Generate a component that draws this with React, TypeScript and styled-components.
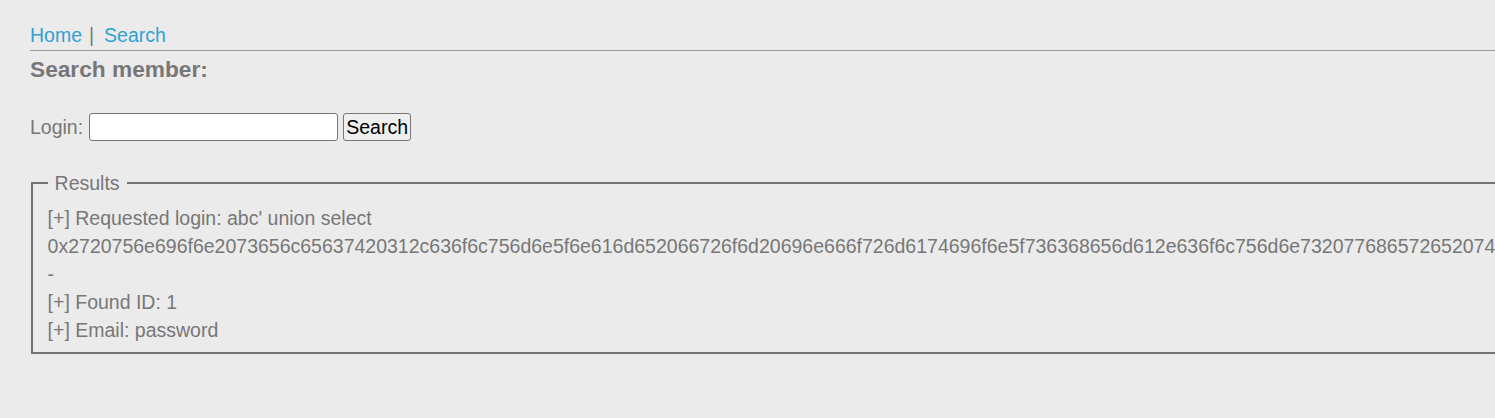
import React from "react";
import styled, { createGlobalStyle } from "styled-components";

const GlobalStyle = createGlobalStyle`
  html, body {
    margin: 0;
    padding: 0;
    background: #ebebeb;
    overflow: hidden;
  }
  body {
    font-family: "Liberation Sans", Arial, sans-serif;
    font-size: 19.5px;
    color: #777777;
  }
`;

const Page = styled.div`
  padding: 21px 0 0 30px;
  line-height: 28px;
`;

const Nav = styled.nav`
  display: flex;
  align-items: center;
  height: 28px;
`;

const NavLink = styled.a`
  color: #2fa2d2;
  text-decoration: none;
`;

const Sep = styled.span`
  color: #777777;
  margin: 0 10px 0 7px;
`;

const Rule = styled.hr`
  margin: 1px 0 0 0;
  border: none;
  border-top: 1px solid #9a9a9a;
  height: 0;
`;

const Title = styled.h3`
  margin: 4px 0 0 0;
  font-size: 22.7px;
  font-weight: bold;
  line-height: 28px;
  color: #777777;
`;

const Form = styled.form`
  display: flex;
  align-items: center;
  gap: 6px;
  margin-top: 30px;
  height: 28px;
`;

const Label = styled.label`
  color: #777777;
`;

const Input = styled.input`
  box-sizing: border-box;
  width: 249px;
  height: 28px;
  margin: 0;
  padding: 1px 2px;
  border: 1px solid #767676;
  border-radius: 3px;
  background: #ffffff;
  font: inherit;
`;

const Button = styled.button`
  box-sizing: border-box;
  width: 68px;
  height: 28px;
  margin: 0 0 0 -1px;
  padding: 0;
  border: 1px solid #767676;
  border-radius: 3px;
  background: #efefef;
  color: #000000;
  font-family: "Liberation Sans", Arial, sans-serif;
  font-size: 19.5px;
  line-height: 26px;
`;

const Results = styled.fieldset`
  margin: 28px 2px 0 1px;
  padding: 7px 14.6px 8px 14.6px;
  border: 2px solid #727272;
  border-right: none;
  min-width: 0;
  width: max-content;
`;

const Legend = styled.legend`
  padding: 0 7px;
  color: #777777;
  line-height: 28px;
`;

const Line = styled.div`
  white-space: nowrap;
  line-height: 28px;
  color: #777777;
`;

const hex =
  "0x2720756e696f6e2073656c65637420312c636f6c756d6e5f6e616d652066726f6d20696e666f726d6174696f6e5f736368656d612e636f6c756d6e73207768657265207461626c655f6e616d653d2775736572732720";

export default function App() {
  return (
    <>
      <GlobalStyle />
      <Page>
        <Nav>
          <NavLink href="#">Home</NavLink>
          <Sep>|</Sep>
          <NavLink href="#">Search</NavLink>
        </Nav>
        <Rule />
        <Title>Search member:</Title>
        <Form onSubmit={(e) => e.preventDefault()}>
          <Label htmlFor="login">Login:</Label>
          <Input id="login" type="text" />
          <Button type="submit">Search</Button>
        </Form>
        <Results>
          <Legend>Results</Legend>
          <Line>[+] Requested login: abc' union select</Line>
          <Line>{hex}</Line>
          <Line>-</Line>
          <Line>[+] Found ID: 1</Line>
          <Line>[+] Email: password</Line>
        </Results>
      </Page>
    </>
  );
}
